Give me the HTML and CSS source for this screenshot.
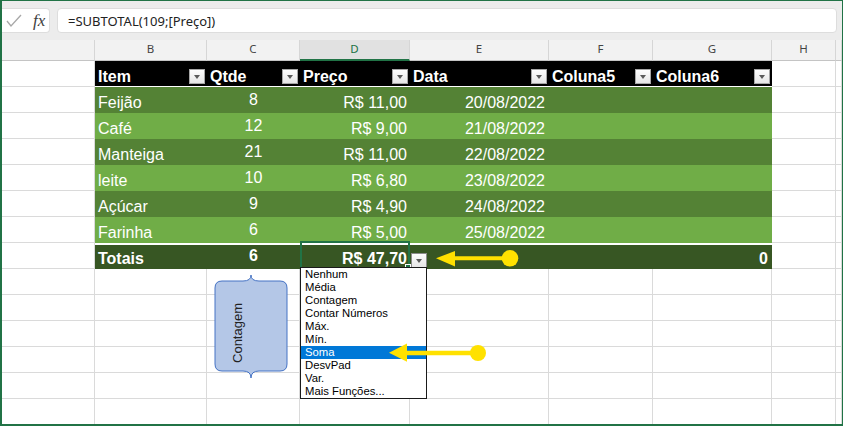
FILE: index.html
```html
<!DOCTYPE html>
<html lang="pt-BR">
<head>
<meta charset="utf-8">
<title>Planilha</title>
<link rel="stylesheet" href="styles.css">
</head>
<body>
<div class="frame">
  <div class="fbar">
    <div class="fxbox">
      <svg class="chk" width="16" height="14" viewBox="0 0 16 14"><path d="M1 7 L5 12 L15 1" fill="none" stroke="#a8a8a8" stroke-width="1.3"/></svg>
      <span class="fx">fx</span>
    </div>
    <div class="formula">=SUBTOTAL(109;[Preço])</div>
  </div>
  <div class="colhead">
    <div></div><div>B</div><div>C</div><div class="sel">D</div><div>E</div><div>F</div><div>G</div><div>H</div><div></div>
  </div>
  <div class="sheet">
    <div class="row">
      <div></div>
      <div class="t hd"><span>Item</span><i class="dd"></i></div>
      <div class="t hd"><span>Qtde</span><i class="dd"></i></div>
      <div class="t hd"><span>Preço</span><i class="dd"></i></div>
      <div class="t hd"><span>Data</span><i class="dd"></i></div>
      <div class="t hd"><span>Coluna5</span><i class="dd"></i></div>
      <div class="t hd"><span>Coluna6</span><i class="dd"></i></div>
      <div></div><div></div>
    </div>
    <div class="row">
      <div></div>
      <div class="t dk l">Feijão</div><div class="t dk n">8</div><div class="t dk r">R$ 11,00</div><div class="t dk d">20/08/2022</div><div class="t dk"></div><div class="t dk"></div>
      <div></div><div></div>
    </div>
    <div class="row">
      <div></div>
      <div class="t lt l">Café</div><div class="t lt n">12</div><div class="t lt r">R$ 9,00</div><div class="t lt d">21/08/2022</div><div class="t lt"></div><div class="t lt"></div>
      <div></div><div></div>
    </div>
    <div class="row">
      <div></div>
      <div class="t dk l">Manteiga</div><div class="t dk n">21</div><div class="t dk r">R$ 11,00</div><div class="t dk d">22/08/2022</div><div class="t dk"></div><div class="t dk"></div>
      <div></div><div></div>
    </div>
    <div class="row">
      <div></div>
      <div class="t lt l">leite</div><div class="t lt n">10</div><div class="t lt r">R$ 6,80</div><div class="t lt d">23/08/2022</div><div class="t lt"></div><div class="t lt"></div>
      <div></div><div></div>
    </div>
    <div class="row">
      <div></div>
      <div class="t dk l">Açúcar</div><div class="t dk n">9</div><div class="t dk r">R$ 4,90</div><div class="t dk d">24/08/2022</div><div class="t dk"></div><div class="t dk"></div>
      <div></div><div></div>
    </div>
    <div class="row">
      <div></div>
      <div class="t lt l">Farinha</div><div class="t lt n">6</div><div class="t lt r">R$ 5,00</div><div class="t lt d">25/08/2022</div><div class="t lt"></div><div class="t lt"></div>
      <div></div><div></div>
    </div>
    <div class="row">
      <div></div>
      <div class="t tot l">Totais</div><div class="t tot n">6</div><div class="t tot r">R$ 47,70</div><div class="t tot"></div><div class="t tot"></div><div class="t tot r g">0</div>
      <div></div><div></div>
    </div>
    <div class="row"><div></div><div></div><div></div><div></div><div></div><div></div><div></div><div></div><div></div></div>
    <div class="row"><div></div><div></div><div></div><div></div><div></div><div></div><div></div><div></div><div></div></div>
    <div class="row"><div></div><div></div><div></div><div></div><div></div><div></div><div></div><div></div><div></div></div>
    <div class="row"><div></div><div></div><div></div><div></div><div></div><div></div><div></div><div></div><div></div></div>
    <div class="row"><div></div><div></div><div></div><div></div><div></div><div></div><div></div><div></div><div></div></div>
    <div class="row"><div></div><div></div><div></div><div></div><div></div><div></div><div></div><div></div><div></div></div>
  </div>

  <div class="selbox"><i class="handle"></i></div>
  <i class="dd tdd"></i>
  <ul class="list">
    <li>Nenhum</li>
    <li>Média</li>
    <li>Contagem</li>
    <li>Contar Números</li>
    <li>Máx.</li>
    <li>Mín.</li>
    <li class="on">Soma</li>
    <li>DesvPad</li>
    <li>Var.</li>
    <li>Mais Funções...</li>
  </ul>

  <svg class="overlay" width="843" height="426" viewBox="0 0 843 426">
    <path d="M222 281 L243 281 Q251 281 251 275 Q251 281 259 281 L280 281 Q287 281 287 288 L287 364 Q287 371 280 371 L259 371 Q251 371 251 378 Q251 371 243 371 L222 371 Q215 371 215 364 L215 288 Q215 281 222 281 Z" fill="#b4c7e7" stroke="#4472c4" stroke-width="1"/>
    <text class="calltext" transform="translate(242,333) rotate(-90)" text-anchor="middle">Contagem</text>
    <line x1="452" y1="258.3" x2="510" y2="258.3" stroke="#ffe100" stroke-width="4"/>
    <polygon points="436,258.3 455,251 455,266.5" fill="#ffe100"/>
    <circle cx="510" cy="258.3" r="8.3" fill="#ffe100"/>
    <line x1="404" y1="353" x2="478" y2="353" stroke="#ffe100" stroke-width="4.5"/>
    <polygon points="389,352.7 407,343.5 407,361.8" fill="#ffe100"/>
    <circle cx="478" cy="353" r="8" fill="#ffe100"/>
  </svg>
</div>
</body>
</html>
```

FILE: styles.css
```css
html, body {
  margin: 0;
  padding: 0;
  background: #fff;
}

.frame {
  position: relative;
  width: 843px;
  height: 426px;
  box-sizing: border-box;
  border: 1px solid #217346;
  border-left-width: 2px;
  border-bottom-width: 2px;
  overflow: hidden;
  background: #fff;
}

/* formula bar */
.fbar {
  display: flex;
  align-items: flex-start;
  height: 39px;
  box-sizing: border-box;
  padding-top: 7px;
  background: #ececec;
}

.fxbox {
  display: flex;
  align-items: center;
  width: 48px;
  height: 25px;
  box-sizing: border-box;
  background: #fff;
  border: 1px solid #dddddd;
  border-left: none;
  border-radius: 0 4px 4px 0;
}

.chk {
  margin-left: 4px;
}

.fx {
  margin-left: 11px;
  font-family: "Liberation Serif", serif;
  font-style: italic;
  font-size: 17px;
  color: #404040;
  line-height: 20px;
}

.formula {
  flex: 1;
  margin-left: 7px;
  margin-right: 5px;
  height: 25px;
  box-sizing: border-box;
  border: 1px solid #dddddd;
  border-radius: 4px;
  background: #fff;
  padding: 1px 0 0 10px;
  font-family: "Noto Sans", sans-serif;
  font-size: 13px;
  line-height: 22px;
  color: #222;
}

/* column letters */
.colhead,
.row {
  display: grid;
  grid-template-columns: 93px 112px 93px 110px 139px 104px 119px 64px 1fr;
}

.colhead {
  height: 21px;
  background: #f2f2f2;
}

.colhead > div {
  box-sizing: border-box;
  height: 21px;
  border-right: 1px solid #d6d6d6;
  border-bottom: 1px solid #c4c4c4;
  text-align: center;
  font-family: "Noto Sans", sans-serif;
  font-size: 11.5px;
  line-height: 18px;
  color: #444;
}

.colhead > .sel {
  background: #e1e1e1;
  color: #217346;
  border-bottom: 2px solid #217346;
}

/* sheet */
.row {
  height: 26px;
}

.row > div {
  box-sizing: border-box;
  border-right: 1px solid #dadada;
  border-bottom: 1px solid #dadada;
}

.row > .t {
  border: none;
  display: flex;
  align-items: flex-end;
  color: #fff;
  font-family: "Liberation Sans", Arial, sans-serif;
  font-size: 16px;
  line-height: 18px;
  white-space: nowrap;
}

.row > .hd {
  background: #000;
  font-weight: bold;
  border-bottom: 1px solid #fff;
  justify-content: space-between;
  padding: 0 2px 0 3px;
}

.hd .dd {
  margin-bottom: 2px;
}

.dk { background: #548235; }
.lt { background: #70ad47; }

.row > .tot {
  background: #375623;
  font-weight: bold;
  border-top: 2px solid #fff;
}

.l {
  padding: 0 0 1px 3px;
}

.n {
  justify-content: center;
  padding-bottom: 4px;
}

.r {
  justify-content: flex-end;
  padding: 0 3px 1.5px 0;
}

.d {
  justify-content: flex-end;
  padding: 0 4px 1.5px 0;
}

.g {
  padding-right: 4px;
}

/* filter button */
.dd {
  position: relative;
  display: block;
  width: 16px;
  height: 15px;
  box-sizing: border-box;
  border: 1px solid #a6a6a6;
  background: linear-gradient(#fdfdfd, #e6e6e6);
}

.dd::after {
  content: "";
  position: absolute;
  left: 4px;
  top: 5px;
  border-left: 3.5px solid transparent;
  border-right: 3.5px solid transparent;
  border-top: 4px solid #5a5a5a;
}

/* overlays */
.selbox {
  position: absolute;
  left: 298px;
  top: 240px;
  width: 110px;
  height: 28px;
  box-sizing: border-box;
  border: 2px solid #217346;
}

.handle {
  position: absolute;
  right: -3px;
  bottom: -3px;
  width: 4px;
  height: 4px;
  background: #217346;
  border: 1px solid #fff;
}

.tdd {
  position: absolute;
  left: 409px;
  top: 252px;
  border-color: #8c8c8c;
}

.list {
  position: absolute;
  left: 298px;
  top: 266px;
  width: 127px;
  height: 132px;
  box-sizing: border-box;
  margin: 0;
  padding: 0;
  list-style: none;
  background: #fff;
  border: 1px solid #1a1a1a;
  font-family: "Liberation Sans", Arial, sans-serif;
  font-size: 11.3px;
  line-height: 13px;
  color: #000;
}

.list li {
  height: 13px;
  padding-left: 4px;
  white-space: nowrap;
}

.list li.on {
  background: #0078d7;
  color: #fff;
}

.overlay {
  position: absolute;
  left: -2px;
  top: -1px;
  pointer-events: none;
}

.calltext {
  font-family: "Liberation Sans", Arial, sans-serif;
  font-size: 13px;
  fill: #222;
}
```
